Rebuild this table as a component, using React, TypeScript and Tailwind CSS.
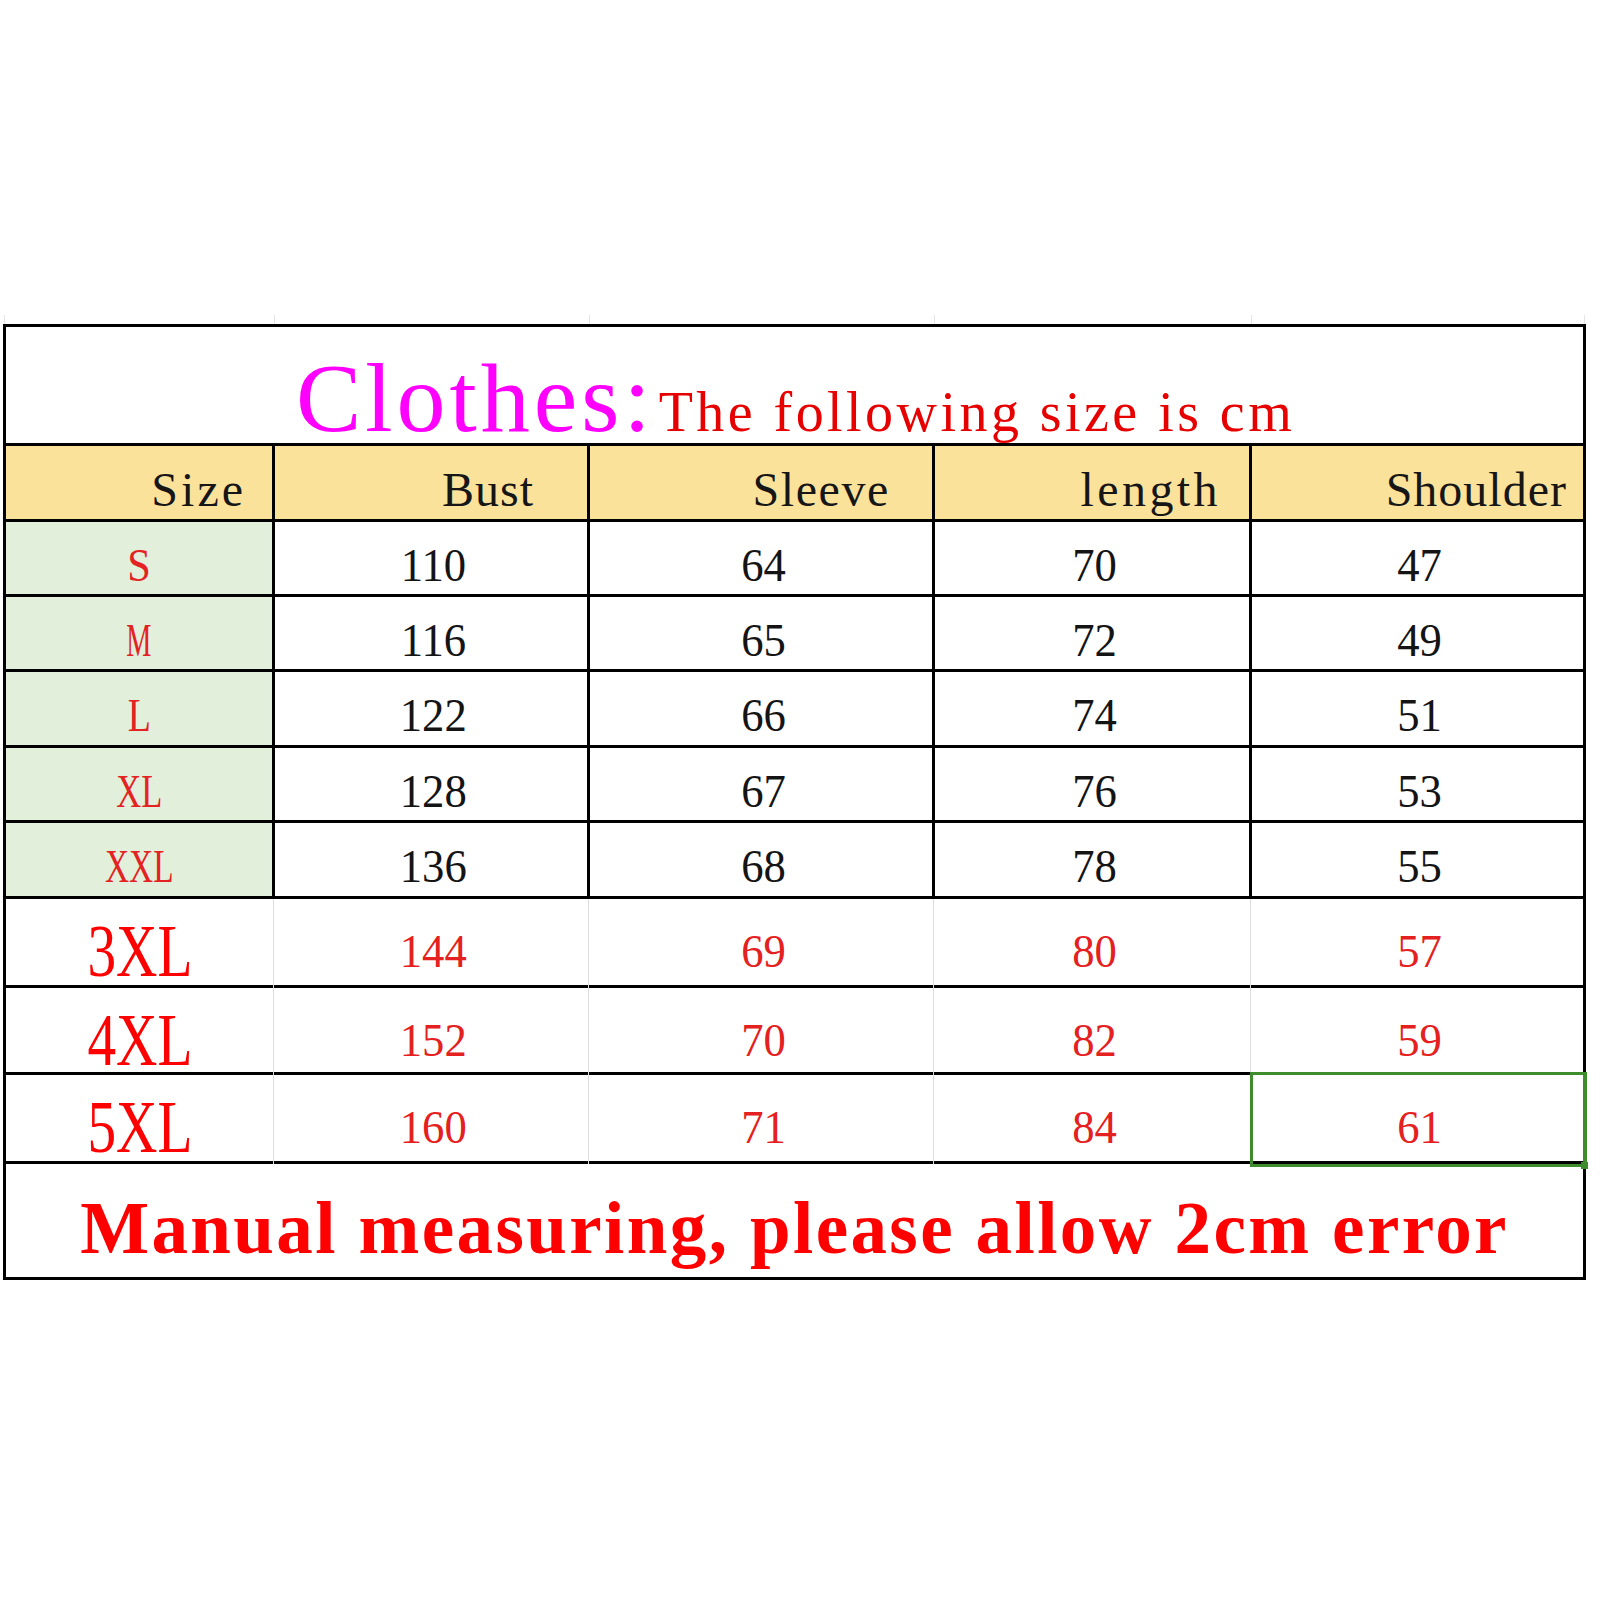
import React from "react";

const COLS = "grid grid-cols-[269px_315px_345px_317px_331px]";
const SERIF = "font-['Liberation_Serif','Times_New_Roman',serif]";

const topRows = [
  { label: "S", scale: "scale-x-[0.9]", h: "h-[75px]", vals: ["110", "64", "70", "47"] },
  { label: "M", scale: "scale-x-[0.6]", h: "h-[75px]", vals: ["116", "65", "72", "49"] },
  { label: "L", scale: "scale-x-[0.81]", h: "h-[76px]", vals: ["122", "66", "74", "51"] },
  { label: "XL", scale: "scale-x-[0.735]", h: "h-[75px]", vals: ["128", "67", "76", "53"] },
  { label: "XXL", scale: "scale-x-[0.71]", h: "h-[76px]", vals: ["136", "68", "78", "55"] },
];

const bigRows = [
  { label: "3XL", h: "h-[89px]", vals: ["144", "69", "80", "57"] },
  { label: "4XL", h: "h-[87px]", vals: ["152", "70", "82", "59"] },
  { label: "5XL", h: "h-[89px]", vals: ["160", "71", "84", "61"] },
];

const headers = [
  { t: "Size", cls: "pr-[26px] tracking-[3px]" },
  { t: "Bust", cls: "pr-[53px] tracking-[1px]" },
  { t: "Sleeve", cls: "pr-[42px] tracking-[1.6px]" },
  { t: "length", cls: "pr-[28px] tracking-[3.4px]" },
  { t: "Shoulder", cls: "pr-[16px] tracking-[1px]" },
];

export default function App() {
  return (
    <div className="w-[1600px] h-[1600px] bg-white pt-[315px]">
      {/* faint sheet gridline ticks above the table */}
      <div className="flex h-[9px] pl-[4px]">
        <div className="w-[270px] border-l border-[#e6e6e6]" />
        <div className="w-[315px] border-l border-[#e6e6e6]" />
        <div className="w-[345px] border-l border-[#e6e6e6]" />
        <div className="w-[317px] border-l border-[#e6e6e6]" />
        <div className="w-[334px] border-l border-r border-[#e6e6e6]" />
      </div>

      <div className="ml-[3px] w-[1583px] border-[3px] border-black">
        {/* title */}
        <div className="h-[119px] border-b-[3px] border-black flex items-end pl-[290px]">
          <div className="flex items-baseline -mb-[4px] whitespace-nowrap">
            <span className={`${SERIF} text-[98px] leading-none tracking-[4px] text-[#ff00ff]`}>Clothes:</span>
            <span className={`${SERIF} text-[56px] leading-none tracking-[3.45px] text-[#e60000] ml-[4px]`}>
              The following size is cm
            </span>
          </div>
        </div>

        {/* header */}
        <div className={`${COLS} h-[76px] border-b-[3px] border-black bg-[#fbe29b]`}>
          {headers.map((h, i) => (
            <div
              key={h.t}
              className={`flex items-center justify-end pt-[15px] ${i < 4 ? "border-r-[3px] border-black" : ""}`}
            >
              <span className={`${SERIF} text-[48px] leading-none text-[#161616] ${h.cls}`}>{h.t}</span>
            </div>
          ))}
        </div>

        {/* S - XXL */}
        {topRows.map((r) => (
          <div key={r.label} className={`${COLS} ${r.h} border-b-[3px] border-black`}>
            <div className="bg-[#e2efda] border-r-[3px] border-black flex items-center justify-center pt-[14px]">
              <span className={`${SERIF} text-[47px] leading-none text-[#e42222] ${r.scale}`}>{r.label}</span>
            </div>
            {r.vals.map((v, i) => (
              <div
                key={i}
                className={`flex items-center justify-center pt-[14px] pl-[4px] ${i < 3 ? "border-r-[3px] border-black" : ""}`}
              >
                <span className={`${SERIF} text-[47px] leading-none text-[#141414] scale-x-[0.95]`}>{v}</span>
              </div>
            ))}
          </div>
        ))}

        {/* 3XL - 5XL */}
        {bigRows.map((r, ri) => (
          <div key={r.label} className={`${COLS} ${r.h} border-b-[3px] border-black`}>
            <div className="border-r border-[#dddddd] mr-[1px] flex items-center justify-center pt-[16px]">
              <span className={`${SERIF} text-[73px] leading-none text-[#ff0000] scale-x-[0.785]`}>{r.label}</span>
            </div>
            {r.vals.map((v, i) => (
              <div
                key={i}
                className={`relative flex items-center justify-center pt-[16px] pl-[4px] ${i < 3 ? "border-r border-[#dddddd] mr-[1px]" : ""}`}
              >
                <span className={`${SERIF} text-[47px] leading-none text-[#e42020] scale-x-[0.95]`}>{v}</span>
                {ri === 2 && i === 3 && (
                  <>
                    <div className="absolute -left-[2px] -top-[3px] -right-[4px] -bottom-[3px] border-[3px] border-r-[4px] border-[#3f8c2d]" />
                    <div className="absolute -right-[5px] -bottom-[5px] w-[7px] h-[7px] bg-[#3f8c2d]" />
                  </>
                )}
              </div>
            ))}
          </div>
        ))}

        {/* footer */}
        <div className="h-[113px] flex justify-center items-start pt-[28px]">
          <span className={`${SERIF} font-bold text-[73px] leading-none tracking-[2.4px] text-[#ff0000] whitespace-nowrap`}>
            Manual measuring, please allow 2cm error
          </span>
        </div>
      </div>
    </div>
  );
}
